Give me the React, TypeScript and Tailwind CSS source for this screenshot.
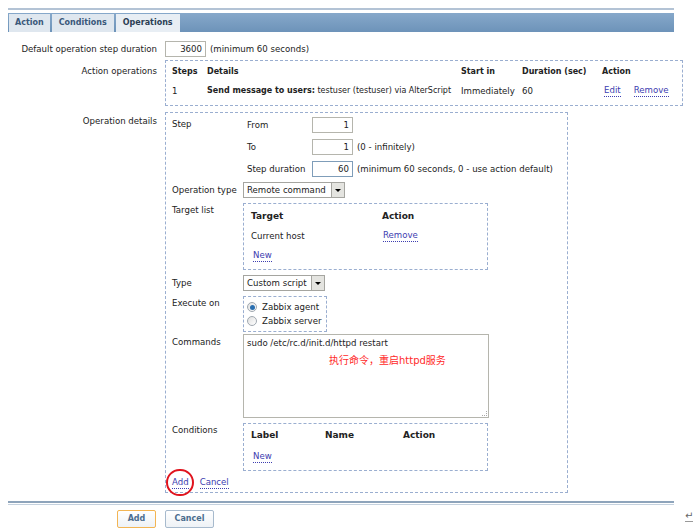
import React from "react";

const font = { fontFamily: '"DejaVu Sans", Verdana, "Noto Sans CJK SC", sans-serif' };

function Link({ children, className = "" }: { children: React.ReactNode; className?: string }) {
  return (
    <span className={`text-[#3d3db0] border-b border-dotted border-[#3d3db0] leading-[11px] ${className}`}>
      {children}
    </span>
  );
}

function Input({ value, width = "w-[41px]", focus = false }: { value: string; width?: string; focus?: boolean }) {
  return (
    <div
      className={`${width} h-[16px] border bg-white text-right pr-[3px] leading-[14px] ${
        focus ? "border-[#7f9db9]" : "border-[#b5b5ad]"
      }`}
    >
      {value}
    </div>
  );
}

function Select({ value, width }: { value: string; width: string }) {
  return (
    <div className={`${width} h-[16px] flex border border-[#a5a5a0] bg-white`}>
      <div className="flex-1 pl-[3px] leading-[14px] whitespace-nowrap">{value}</div>
      <div className="w-[13px] h-[14px] bg-[#e4e4e0] border-l border-[#a5a5a0] flex items-center justify-center">
        <div className="w-0 h-0 border-l-[3px] border-r-[3px] border-t-[3px] border-l-transparent border-r-transparent border-t-black" />
      </div>
    </div>
  );
}

function Radio({ checked, label }: { checked?: boolean; label: string }) {
  return (
    <div className="flex items-center h-[14px] gap-[5px]">
      <span className="w-[10px] h-[10px] rounded-full border border-[#a0a8b0] bg-gradient-to-br from-[#e0e0e0] to-white flex items-center justify-center">
        {checked && <span className="w-[5px] h-[5px] rounded-full bg-[#2a6fb0]" />}
      </span>
      <span>{label}</span>
    </div>
  );
}

export default function App() {
  return (
    <div style={font} className="relative w-[699px] h-[532px] bg-white text-[8.6px] text-[#222] overflow-hidden">
      {/* top line */}
      <div className="ml-[8px] mt-[8px] w-[666px] h-[2px] bg-[#b3c3d5]" />

      {/* tabs */}
      <div className="ml-[8px] mt-[3px] w-[666px] h-[19px] bg-gradient-to-b from-[#86a8ca] to-[#6d93b9] flex items-end gap-[2px] pl-[1px] text-[8px]">
        <div className="h-[18px] px-[6px] bg-[#dfe7ef] font-bold text-[#3a587a] flex items-center">Action</div>
        <div className="h-[18px] px-[7px] bg-[#dfe7ef] font-bold text-[#3a587a] flex items-center">Conditions</div>
        <div className="h-[18px] px-[7px] bg-[#e8eef4] font-bold text-[#2c3e55] flex items-center">Operations</div>
      </div>

      {/* default step duration */}
      <div className="flex mt-[9px] h-[16px] items-center">
        <div className="w-[157px] text-right">Default operation step duration</div>
        <div className="ml-[8px] flex items-center gap-[4px]">
          <Input value="3600" />
          <span>(minimum 60 seconds)</span>
        </div>
      </div>

      {/* action operations */}
      <div className="flex mt-[3px]">
        <div className="w-[157px] text-right pt-[5px]">Action operations</div>
        <div className="ml-[8px] w-[518px] h-[46px] border border-dashed border-[#9aaed0] pl-[6px]">
          <div className="flex font-bold text-[8px] h-[12px] mt-[5px] items-center">
            <div className="w-[35px]">Steps</div>
            <div className="w-[254px]">Details</div>
            <div className="w-[61px]">Start in</div>
            <div className="w-[80px]">Duration (sec)</div>
            <div>Action</div>
          </div>
          <div className="flex h-[12px] mt-[7px] items-center">
            <div className="w-[35px]">1</div>
            <div className="w-[254px] whitespace-nowrap text-[8px]">
              <b>Send message to users:</b> testuser (testuser) via AlterScript
            </div>
            <div className="w-[61px]">Immediately</div>
            <div className="w-[82px]">60</div>
            <Link>Edit</Link>
            <Link className="ml-[13px]">Remove</Link>
          </div>
        </div>
      </div>

      {/* operation details */}
      <div className="flex mt-[6px]">
        <div className="w-[157px] text-right pt-[3px]">Operation details</div>
        <div className="ml-[8px] w-[403px] h-[381px] border border-dashed border-[#9aaed0] pl-[6px]">
          {/* step */}
          <div className="flex mt-[4px]">
            <div className="w-[71px] pt-[1px]">Step</div>
            <div className="flex flex-col gap-[6px] pl-[4px]">
              <div className="flex items-center">
                <div className="w-[65px]">From</div>
                <Input value="1" />
              </div>
              <div className="flex items-center">
                <div className="w-[65px]">To</div>
                <Input value="1" />
                <span className="ml-[4px]">(0 - infinitely)</span>
              </div>
              <div className="flex items-center">
                <div className="w-[65px]">Step duration</div>
                <Input value="60" focus />
                <span className="ml-[4px] whitespace-nowrap">(minimum 60 seconds, 0 - use action default)</span>
              </div>
            </div>
          </div>

          {/* operation type */}
          <div className="flex mt-[5px] items-center">
            <div className="w-[71px]">Operation type</div>
            <Select value="Remote command" width="w-[102px]" />
          </div>

          {/* target list */}
          <div className="flex mt-[5px]">
            <div className="w-[71px] pt-[1px]">Target list</div>
            <div className="w-[245px] h-[67px] border border-dashed border-[#9aaed0] pl-[7px]">
              <div className="flex font-bold text-[9px] mt-[7px] h-[12px] items-center">
                <div className="w-[131px]">Target</div>
                <div>Action</div>
              </div>
              <div className="flex mt-[7px] h-[12px] items-center">
                <div className="w-[132px]">Current host</div>
                <Link>Remove</Link>
              </div>
              <div className="mt-[8px] ml-[2px] flex">
                <Link>New</Link>
              </div>
            </div>
          </div>

          {/* type */}
          <div className="flex mt-[5px] items-center">
            <div className="w-[71px]">Type</div>
            <Select value="Custom script" width="w-[82px]" />
          </div>

          {/* execute on */}
          <div className="flex mt-[5px]">
            <div className="w-[71px] pt-[1px]">Execute on</div>
            <div className="w-[84px] h-[36px] border border-dashed border-[#9aaed0] pl-[3px] pt-[3px] flex flex-col">
              <Radio checked label="Zabbix agent" />
              <Radio label="Zabbix server" />
            </div>
          </div>

          {/* commands */}
          <div className="flex mt-[2px]">
            <div className="w-[71px] pt-[2px]">Commands</div>
            <div className="relative w-[246px] h-[84px] border border-[#b5b5ad] pl-[3px] pt-[2px]">
              <div className="whitespace-nowrap">sudo /etc/rc.d/init.d/httpd restart</div>
              <div className="ml-[82px] mt-[3px] text-[10px] text-[#ff2a2a]">执行命令，重启httpd服务</div>
              <div className="absolute right-[1px] bottom-[1px] w-[5px] h-[5px] border-r border-b border-dotted border-[#aaa]" />
            </div>
          </div>

          {/* conditions */}
          <div className="flex mt-[5px]">
            <div className="w-[71px] pt-[1px]">Conditions</div>
            <div className="w-[245px] h-[48px] border border-dashed border-[#9aaed0] pl-[7px]">
              <div className="flex font-bold text-[9px] mt-[6px] h-[12px] items-center">
                <div className="w-[74px]">Label</div>
                <div className="w-[78px]">Name</div>
                <div>Action</div>
              </div>
              <div className="mt-[9px] ml-[2px] flex">
                <Link>New</Link>
              </div>
            </div>
          </div>

          {/* add / cancel */}
          <div className="relative flex mt-[6px] gap-[11px]">
            <Link>Add</Link>
            <Link>Cancel</Link>
            <div className="absolute left-[-6px] top-[-8px] w-[28px] h-[27px] rounded-full border-2 border-[#e0141e]" />
          </div>
        </div>
      </div>

      {/* bottom separator */}
      <div className="ml-[8px] mt-[8px] w-[666px] h-[2px] bg-[#8ea4bb]" />
      <div className="ml-[8px] mt-[1px] w-[666px] h-[1px] bg-[#c5d2df]" />

      {/* buttons */}
      <div className="flex ml-[117px] mt-[5px] gap-[9px] text-[8px]">
        <div className="w-[39px] h-[18px] border border-[#f3b553] rounded-[2px] bg-gradient-to-b from-white to-[#eef2f6] font-bold text-[#4b6d8f] flex items-center justify-center">
          Add
        </div>
        <div className="w-[49px] h-[18px] border border-[#a7bacd] rounded-[2px] bg-gradient-to-b from-white to-[#eef2f6] font-bold text-[#4b6d8f] flex items-center justify-center">
          Cancel
        </div>
      </div>

      <div className="absolute left-[685px] top-[511px] text-[10px] text-[#666] border-b border-[#999] leading-[10px]">↵</div>
    </div>
  );
}
